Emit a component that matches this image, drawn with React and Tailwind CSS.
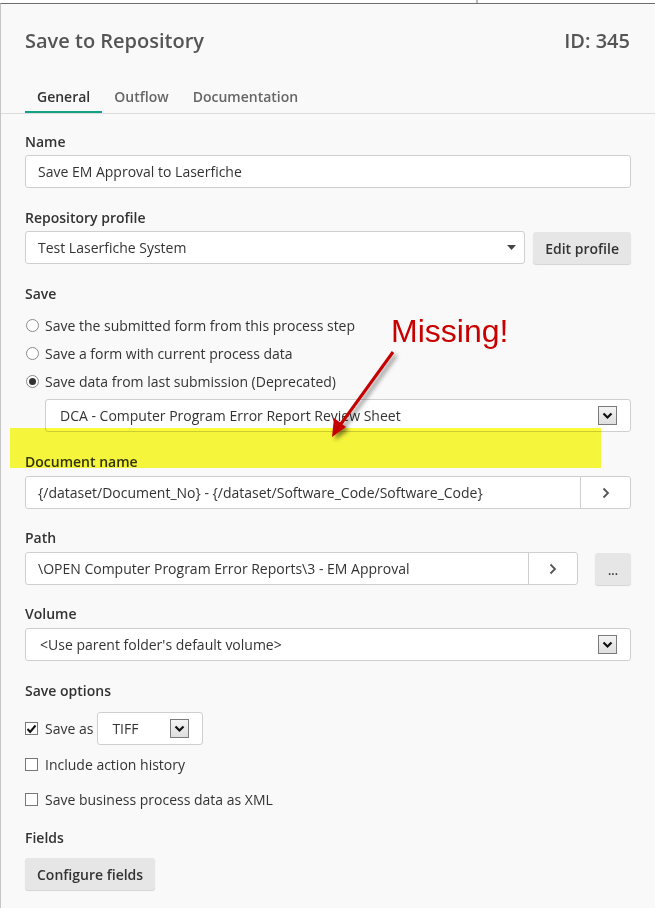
import React from 'react';

const label = "text-[14px] font-semibold text-[#333] leading-[20px]";
const box = "bg-white border border-[#cfcfcf] rounded-[3px] h-[33px] flex items-center text-[14px] text-[#333]";

function OldArrow() {
  return (
    <div className="w-[19px] h-[19px] border border-[#7a7a7a] bg-gradient-to-b from-[#f4f4f4] to-[#dedede] flex items-center justify-center">
      <svg width="11" height="8" viewBox="0 0 11 8">
        <path d="M1.5 1.5 L5.5 5.5 L9.5 1.5" fill="none" stroke="#111" strokeWidth="2.2" />
      </svg>
    </div>
  );
}

function Chevron() {
  return (
    <svg width="8" height="12" viewBox="0 0 8 12">
      <path d="M1.5 1.5 L6 6 L1.5 10.5" fill="none" stroke="#555" strokeWidth="1.8" />
    </svg>
  );
}

function Radio({ checked, children, className }) {
  return (
    <div className={`flex items-center h-[28px] ${className || ''}`}>
      <div className="w-[13px] h-[13px] rounded-full border border-[#8a8a8a] bg-white ml-[1px] flex items-center justify-center">
        {checked ? <div className="w-[7px] h-[7px] rounded-full bg-[#333]" /> : false}
      </div>
      <span className="ml-[6px] text-[14px] text-[#333]">{children}</span>
    </div>
  );
}

function Checkbox({ checked }) {
  return (
    <div className="w-[13px] h-[13px] border border-[#777] bg-white flex items-center justify-center">
      {checked ?
        <svg width="11" height="10" viewBox="0 0 11 10">
          <path d="M1.5 5 L4.2 8 L9.5 1.5" fill="none" stroke="#111" strokeWidth="2" />
        </svg>
      : false}
    </div>
  );
}

export default function App() {
  return (
    <div className="w-[655px] h-[908px] bg-white relative overflow-hidden font-['Open_Sans',sans-serif]">
      <div className="absolute left-[476px] top-0 w-[2px] h-[3px] bg-[#bbb]" />
      <div className="mt-[3px] h-[905px] border-t border-l border-t-[#6e6e6e] border-l-[#c6c6c6] bg-[#f9f9f9]">

        {/* header */}
        <div className="flex justify-between items-center px-[24px] pt-[22px] h-[51px] text-[20px] font-semibold text-[#555] leading-[28px]">
          <div>Save to Repository</div>
          <div className="pr-[1px]">ID: 345</div>
        </div>

        {/* tabs */}
        <div className="flex pl-[24px] mt-[32px] border-b border-[#dcdcdc] text-[14px] leading-[20px]">
          <div className="px-3 pb-[4px] border-b-2 border-[#14a085] font-semibold text-[#333]">General</div>
          <div className="px-3 pb-[4px] border-b-2 border-transparent font-semibold text-[#666]">Outflow</div>
          <div className="px-3 pb-[4px] border-b-2 border-transparent font-semibold text-[#666]">Documentation</div>
        </div>

        <div className="px-[24px] pt-[18px]">
          <div className={label}>Name</div>
          <div className={`${box} mt-[3px] pl-[12px]`}>Save EM Approval to Laserfiche</div>

          <div className={`${label} mt-[20px]`}>Repository profile</div>
          <div className="flex mt-[3px] gap-[8px]">
            <div className={`${box} flex-1 pl-[12px] pr-[8px] justify-between`}>
              <span>Test Laserfiche System</span>
              <svg width="9" height="5" viewBox="0 0 9 5"><path d="M0 0 H9 L4.5 5 Z" fill="#444" /></svg>
            </div>
            <div className="h-[32px] mt-[1px] px-[12px] rounded-[3px] bg-[#e6e6e6] shadow-[0_1px_1px_rgba(0,0,0,0.15)] flex items-center text-[14px] font-semibold text-[#333]">Edit profile</div>
          </div>

          <div className={`${label} mt-[20px]`}>Save</div>
          <div className="mt-[7px]">
            <Radio>Save the submitted form from this process step</Radio>
            <Radio>Save a form with current process data</Radio>
            <Radio checked>Save data from last submission (Deprecated)</Radio>
          </div>
          <div className={`${box} mt-[4px] ml-[20px] pl-[14px] pr-[13px] justify-between`}>
            <span>DCA - Computer Program Error Report Review Sheet</span>
            <OldArrow />
          </div>

          <div className={`${label} mt-[20px]`}>Document name</div>
          <div className={`${box} mt-[4px] overflow-hidden`}>
            <span className="flex-1 pl-[12px]">{'{/dataset/Document_No} - {/dataset/Software_Code/Software_Code}'}</span>
            <div className="w-[50px] h-full border-l border-[#cfcfcf] flex items-center justify-center"><Chevron /></div>
          </div>

          <div className={`${label} mt-[19px]`}>Path</div>
          <div className="flex mt-[4px] gap-[17px]">
            <div className={`${box} flex-1 overflow-hidden`}>
              <span className="flex-1 pl-[12px]">\OPEN Computer Program Error Reports\3 - EM Approval</span>
              <div className="w-[49px] h-full border-l border-[#cfcfcf] flex items-center justify-center"><Chevron /></div>
            </div>
            <div className="w-[36px] h-[32px] mt-[1px] rounded-[3px] bg-[#e6e6e6] shadow-[0_1px_1px_rgba(0,0,0,0.15)] flex items-center justify-center text-[12px] font-semibold text-[#333] leading-none pt-[4px]">...</div>
          </div>

          <div className={`${label} mt-[19px]`}>Volume</div>
          <div className={`${box} mt-[4px] pl-[14px] pr-[13px] justify-between`}>
            <span>&lt;Use parent folder's default volume&gt;</span>
            <OldArrow />
          </div>

          <div className={`${label} mt-[20px]`}>Save options</div>
          <div className="flex items-center mt-[11px] h-[33px]">
            <Checkbox checked />
            <span className="ml-[7px] text-[14px] text-[#333]">Save as</span>
            <div className={`${box} ml-[4px] w-[106px] pl-[14px] pr-[13px] justify-between`}>
              <span>TIFF</span>
              <OldArrow />
            </div>
          </div>
          <div className="flex items-center mt-[9px] h-[20px]">
            <Checkbox />
            <span className="ml-[7px] text-[14px] text-[#333]">Include action history</span>
          </div>
          <div className="flex items-center mt-[15px] h-[20px]">
            <Checkbox />
            <span className="ml-[7px] text-[14px] text-[#333]">Save business process data as XML</span>
          </div>

          <div className={`${label} mt-[19px]`}>Fields</div>
          <div className="inline-flex mt-[10px] h-[32px] px-[12px] rounded-[3px] bg-[#e6e6e6] shadow-[0_1px_1px_rgba(0,0,0,0.15)] items-center text-[14px] font-semibold text-[#333]">Configure fields</div>
        </div>
      </div>

      {/* annotation */}
      <div className="absolute left-[10px] top-[428px] w-[591px] h-[40px] bg-[#fbfb3c] mix-blend-multiply" />
      <div className="absolute left-[391px] top-[311px] text-[32px] leading-[40px] text-[#c80000] font-['Liberation_Sans',Arial,sans-serif]">Missing!</div>
      <svg className="absolute left-[320px] top-[345px]" width="90" height="105" viewBox="0 0 90 105">
        <defs>
          <filter id="sh" x="-30%" y="-30%" width="160%" height="160%">
            <feDropShadow dx="3" dy="3" stdDeviation="2" floodColor="#000" floodOpacity="0.45" />
          </filter>
        </defs>
        <g filter="url(#sh)">
          <line x1="73" y1="7" x2="18" y2="83" stroke="#c40000" strokeWidth="3" />
          <path d="M12 92 L14 73 L26 82 Z" fill="#c40000" />
        </g>
      </svg>
    </div>
  );
}
